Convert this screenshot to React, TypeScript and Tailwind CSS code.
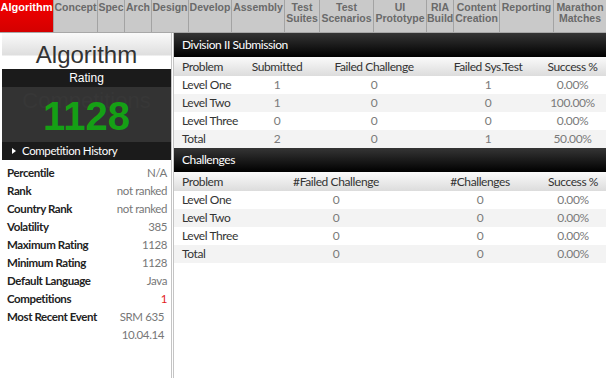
import React from "react";

const tabs: { label: React.ReactNode; w: string; active?: boolean }[] = [
  { label: "Algorithm", w: "w-[54px]", active: true },
  { label: "Concept", w: "w-[44px]" },
  { label: "Spec", w: "w-[27px]" },
  { label: "Arch", w: "w-[27px]" },
  { label: "Design", w: "w-[37px]" },
  { label: "Develop", w: "w-[43px]" },
  { label: "Assembly", w: "w-[53px]" },
  { label: <>Test<br />Suites</>, w: "w-[35px]" },
  { label: <>Test<br />Scenarios</>, w: "w-[54px]" },
  { label: <>UI<br />Prototype</>, w: "w-[53px]" },
  { label: <>RIA<br />Build</>, w: "w-[27px]" },
  { label: <>Content<br />Creation</>, w: "w-[46px]" },
  { label: "Reporting", w: "w-[54px]" },
  { label: <>Marathon<br />Matches</>, w: "flex-1" },
];

const stats: [string, string, string?][] = [
  ["Percentile", "N/A"],
  ["Rank", "not ranked"],
  ["Country Rank", "not ranked"],
  ["Volatility", "385"],
  ["Maximum Rating", "1128"],
  ["Minimum Rating", "1128"],
  ["Default Language", "Java"],
  ["Competitions", "1", "red"],
];

const body = "font-['Lato','Noto_Sans',sans-serif] tracking-[-0.4px]";

function SectionHeader({ title }: { title: string }) {
  return (
    <div className="h-[24px] flex items-center pl-[8px] bg-[linear-gradient(to_bottom,#353535,#000)] text-white text-[12px]">
      {title}
    </div>
  );
}

function Table({
  cols,
  head,
  rows,
}: {
  cols: string;
  head: string[];
  rows: string[][];
}) {
  return (
    <div className="text-[12px]">
      <div
        className={`grid ${cols} h-[19px] items-center bg-[linear-gradient(to_bottom,#fafafa,#dcdcdc)] text-[#333]`}
      >
        {head.map((h, i) => (
          <div key={i} className={i === 0 ? "pl-[8px] whitespace-nowrap" : "text-center whitespace-nowrap"}>
            {h}
          </div>
        ))}
      </div>
      {rows.map((r, ri) => (
        <div
          key={ri}
          className={`grid ${cols} h-[18px] items-center ${ri % 2 === 1 ? "bg-[#f3f3f3]" : "bg-white"}`}
        >
          {r.map((c, i) => (
            <div
              key={i}
              className={
                i === 0
                  ? "pl-[8px] text-[#333] whitespace-nowrap"
                  : "text-center text-[#7a7a7a] whitespace-nowrap"
              }
            >
              {c}
            </div>
          ))}
        </div>
      ))}
    </div>
  );
}

export default function App() {
  return (
    <div className="w-[606px] h-[378px] overflow-hidden bg-white flex flex-col">
      <div className="flex h-[33px] bg-[#c9c9c9] border-b border-[#a8a8a8] font-['Liberation_Sans',Arial,sans-serif] font-bold text-[10.5px] leading-[11px]">
        {tabs.map((t, i) => (
          <div
            key={i}
            className={`${t.w} shrink-0 text-center pt-[2px] ${i < tabs.length - 1 ? "border-r border-[#a3a3a3]" : ""} ${
              t.active
                ? "bg-[linear-gradient(to_bottom,#f40000,#d40000)] text-white text-[11px]"
                : "text-[#6a6a6a]"
            }`}
          >
            {t.label}
          </div>
        ))}
      </div>
      <div className="flex flex-1 min-h-0">
        <div className="w-[172px] shrink-0 border-r border-[#c4c4c4] pl-[2px]">
          <div className="h-[36px] bg-[linear-gradient(to_bottom,#fafafa_0%,#dedede_62%,#fff_63%)] text-center text-[#333] font-['Liberation_Sans',Arial,sans-serif] text-[24px] leading-[44px]">
            Algorithm
          </div>
          <div className="h-[18px] bg-[#1b1b1b] text-white text-center text-[12px] leading-[18px] font-['Liberation_Sans',Arial,sans-serif]">
            Rating
          </div>
          <div className="relative h-[55px] bg-[#333] overflow-hidden flex items-center justify-center">
            <div className="absolute left-0 right-0 top-[-3px] text-center text-[22px] text-[#373737] font-['Liberation_Sans',Arial,sans-serif]">
              Competitions
            </div>
            <div className="relative text-[40px] font-bold text-[#15a015] leading-none font-['Liberation_Sans',Arial,sans-serif] mt-[2px]">
              1128
            </div>
          </div>
          <div className={`h-[18px] bg-[#1b1b1b] text-white flex items-center pl-[10px] text-[11.5px] ${body}`}>
            <span className="w-0 h-0 border-y-[3px] border-y-transparent border-l-[4px] border-l-white mr-[6px]" />
            <span>Competition History</span>
          </div>
          <div className={`pt-[4px] text-[11.5px] ${body}`}>
            {stats.map(([l, v, c]) => (
              <div key={l} className="h-[18px] flex items-center justify-between pl-[5px] pr-[4px]">
                <span className="font-bold text-[#222]">{l}</span>
                <span className={c ? "text-[#e21c1c]" : "text-[#777]"}>{v}</span>
              </div>
            ))}
            <div className="h-[18px] flex items-center justify-between pl-[5px] pr-[7px]">
              <span className="font-bold text-[#222]">Most Recent Event</span>
              <span className="text-[#777]">SRM 635</span>
            </div>
            <div className="h-[18px] flex items-center justify-end pr-[7px]">
              <span className="text-[#777]">10.04.14</span>
            </div>
          </div>
        </div>
        <div className={`flex-1 ml-[1px] border-l border-[#c4c4c4] ${body}`}>
          <SectionHeader title="Division II Submission" />
          <Table
            cols="grid-cols-[69px_68px_126px_102px_67px]"
            head={["Problem", "Submitted", "Failed Challenge", "Failed Sys.Test", "Success %"]}
            rows={[
              ["Level One", "1", "0", "1", "0.00%"],
              ["Level Two", "1", "0", "0", "100.00%"],
              ["Level Three", "0", "0", "0", "0.00%"],
              ["Total", "2", "0", "1", "50.00%"],
            ]}
          />
          <SectionHeader title="Challenges" />
          <Table
            cols="grid-cols-[78px_168px_120px_66px]"
            head={["Problem", "#Failed Challenge", "#Challenges", "Success %"]}
            rows={[
              ["Level One", "0", "0", "0.00%"],
              ["Level Two", "0", "0", "0.00%"],
              ["Level Three", "0", "0", "0.00%"],
              ["Total", "0", "0", "0.00%"],
            ]}
          />
        </div>
      </div>
    </div>
  );
}
